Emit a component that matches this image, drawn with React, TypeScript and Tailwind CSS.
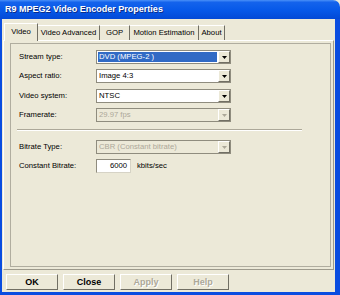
import React from 'react';

const tabs = [
  { label: 'Video', w: 'w-[34px]' },
  { label: 'Video Advanced', w: 'w-[62px]' },
  { label: 'GOP', w: 'w-[30px]' },
  { label: 'Motion Estimation', w: 'w-[69px]' },
  { label: 'About', w: 'w-[26px]' },
];

function Arrow({ disabled }: { disabled?: boolean }) {
  return (
    <div className="w-[12px] h-[12px] shrink-0 bg-[#ece9d8] border border-t-white border-l-white border-r-[#716f64] border-b-[#716f64] flex items-center justify-center">
      <svg width="5" height="3" viewBox="0 0 5 3">
        <path d="M0 0h5L2.5 3z" fill={disabled ? '#aca899' : '#000'} />
      </svg>
    </div>
  );
}

function Combo({ value, selected, disabled }: { value: string; selected?: boolean; disabled?: boolean }) {
  return (
    <div
      className={`w-[135px] h-[14px] flex items-center border border-[#8f8c7e] ${
        disabled ? 'bg-[#ece9d8]' : 'bg-white'
      }`}
    >
      <div className="flex-1 h-full p-[1px] overflow-hidden">
        <div
          className={`h-full flex items-center pl-[1px] whitespace-nowrap ${
            selected ? 'bg-[#316ac5] text-white' : disabled ? 'text-[#aca899]' : 'text-black'
          }`}
        >
          {value}
        </div>
      </div>
      <Arrow disabled={disabled} />
    </div>
  );
}

function Row({ label, disabled, children, className }: { label: string; disabled?: boolean; children: React.ReactNode; className?: string }) {
  return (
    <div className={`flex items-center pl-[8px] h-[14px] ${className ?? ''}`}>
      <div className={`w-[77px] ${disabled ? 'text-[#aca899]' : 'text-black'}`}>{label}</div>
      {children}
    </div>
  );
}

function Button({ label, disabled }: { label: string; disabled?: boolean }) {
  return (
    <div className="w-[52px] h-[16px] flex items-center justify-center bg-[#ece9d8] border border-t-white border-l-white border-r-[#716f64] border-b-[#716f64] text-[9px] font-bold">
      <span className={disabled ? 'text-[#aca899] [text-shadow:1px_1px_0_#fff]' : 'text-black'}>{label}</span>
    </div>
  );
}

export default function App() {
  return (
    <div className="w-[340px] h-[295px] flex flex-col bg-[#ece9d8] overflow-hidden font-['Liberation_Sans',Arial,sans-serif] text-[7.7px] leading-none">
      {/* Title bar */}
      <div className="h-[19px] shrink-0 flex items-center pl-[5px] rounded-tr-[7px] bg-[linear-gradient(to_bottom,#4a90f8_0%,#1463ec_12%,#0658e8_55%,#0349d6_100%)]">
        <span className="text-white font-bold text-[9px] [text-shadow:1px_1px_0_#0b2d87]">
          R9 MPEG2 Video Encoder Properties
        </span>
      </div>

      {/* Window body */}
      <div className="flex-1 flex flex-col border-l-2 border-r-[5px] border-b-[3px] border-[#0a4de0]">
        {/* Tab header */}
        <div className="h-[21px] shrink-0 flex items-end pl-[2px] relative z-10">
          {tabs.map((t, i) =>
            i === 0 ? (
              <div
                key={t.label}
                className={`${t.w} h-[18px] -mb-px flex items-center justify-center bg-[#ece9d8] border-t border-l border-white border-r border-r-[#716f64] pb-[1px]`}
              >
                {t.label}
              </div>
            ) : (
              <div
                key={t.label}
                className={`${t.w} h-[15px] flex items-center justify-center border-t border-t-white border-r border-r-[#716f64] whitespace-nowrap`}
              >
                {t.label}
              </div>
            )
          )}
        </div>

        {/* Tab panel */}
        <div className="h-[230px] shrink-0 ml-px mr-px flex flex-col border border-t-white border-l-white border-r-[#9d9a8c] border-b-[#9d9a8c]">
          <div className="flex-1 ml-[6px] mr-[2px] mt-[2px] mb-[2px] border border-[#b0ad9f] flex flex-col pt-[6px]">
            <Row label="Stream type:">
              <Combo value="DVD (MPEG-2 )" selected />
            </Row>
            <Row label="Aspect ratio:" className="mt-[5px]">
              <Combo value="Image 4:3" />
            </Row>
            <Row label="Video system:" className="mt-[6px]">
              <Combo value="NTSC" />
            </Row>
            <Row label="Framerate:" className="mt-[5px]">
              <Combo value="29.97 fps" disabled />
            </Row>

            <div className="ml-[6px] mt-[7px] w-[285px] h-[2px] border-t border-t-[#aca899] border-b border-b-white" />

            <Row label="Bitrate Type:" className="mt-[9px]">
              <Combo value="CBR (Constant bitrate)" disabled />
            </Row>
            <Row label="Constant Bitrate:" className="mt-[5px]">
              <div className="w-[35px] h-[14px] flex items-center justify-end pr-[3px] bg-white border border-t-[#8f8c7e] border-l-[#8f8c7e] border-r-[#d6d3c6] border-b-[#d6d3c6]">
                6000
              </div>
              <span className="ml-[6px]">kbits/sec</span>
            </Row>
          </div>
        </div>

        {/* Buttons */}
        <div className="mt-[4px] pl-[4px] flex gap-[5px]">
          <Button label="OK" />
          <Button label="Close" />
          <Button label="Apply" disabled />
          <Button label="Help" disabled />
        </div>
      </div>
    </div>
  );
}
